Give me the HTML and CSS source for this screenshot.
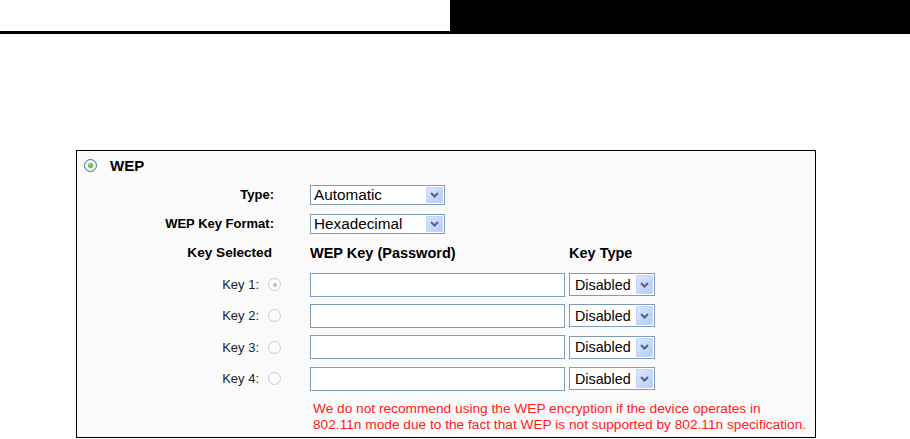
FILE: index.html
```html
<!DOCTYPE html>
<html>
<head>
<meta charset="utf-8">
<link rel="stylesheet" href="styles.css">
</head>
<body>
<div class="header">
  <div class="header-left"></div>
  <div class="header-right"></div>
</div>

<div class="panel">
  <div class="mode-row">
    <span class="radio radio-on"></span>
    <span class="mode-title">WEP</span>
  </div>

  <div class="form">
    <div class="label">Type:</div>
    <div class="cell span2">
      <div class="select select-wide">
        <span class="select-val">Automatic</span>
        <span class="select-btn"><svg width="9" height="6" viewBox="0 0 9 6"><path d="M1 1 L4.5 4.5 L8 1" fill="none" stroke="#4d6185" stroke-width="2"/></svg></span>
      </div>
    </div>

    <div class="label">WEP Key Format:</div>
    <div class="cell span2">
      <div class="select select-wide">
        <span class="select-val">Hexadecimal</span>
        <span class="select-btn"><svg width="9" height="6" viewBox="0 0 9 6"><path d="M1 1 L4.5 4.5 L8 1" fill="none" stroke="#4d6185" stroke-width="2"/></svg></span>
      </div>
    </div>

    <div class="label head">Key Selected</div>
    <div class="cell head">WEP Key (Password)</div>
    <div class="cell head">Key Type</div>

    <div class="label key-label">Key 1:<span class="radio radio-dis radio-dis-on"></span></div>
    <div class="cell"><div class="textbox"></div></div>
    <div class="cell">
      <div class="select select-key">
        <span class="select-val">Disabled</span>
        <span class="select-btn"><svg width="9" height="6" viewBox="0 0 9 6"><path d="M1 1 L4.5 4.5 L8 1" fill="none" stroke="#4d6185" stroke-width="2"/></svg></span>
      </div>
    </div>

    <div class="label key-label">Key 2:<span class="radio radio-dis"></span></div>
    <div class="cell"><div class="textbox"></div></div>
    <div class="cell">
      <div class="select select-key">
        <span class="select-val">Disabled</span>
        <span class="select-btn"><svg width="9" height="6" viewBox="0 0 9 6"><path d="M1 1 L4.5 4.5 L8 1" fill="none" stroke="#4d6185" stroke-width="2"/></svg></span>
      </div>
    </div>

    <div class="label key-label">Key 3:<span class="radio radio-dis"></span></div>
    <div class="cell"><div class="textbox"></div></div>
    <div class="cell">
      <div class="select select-key">
        <span class="select-val">Disabled</span>
        <span class="select-btn"><svg width="9" height="6" viewBox="0 0 9 6"><path d="M1 1 L4.5 4.5 L8 1" fill="none" stroke="#4d6185" stroke-width="2"/></svg></span>
      </div>
    </div>

    <div class="label key-label">Key 4:<span class="radio radio-dis"></span></div>
    <div class="cell"><div class="textbox"></div></div>
    <div class="cell">
      <div class="select select-key">
        <span class="select-val">Disabled</span>
        <span class="select-btn"><svg width="9" height="6" viewBox="0 0 9 6"><path d="M1 1 L4.5 4.5 L8 1" fill="none" stroke="#4d6185" stroke-width="2"/></svg></span>
      </div>
    </div>

    <div class="label"></div>
    <div class="note span2">We do not recommend using the WEP encryption if the device operates in<br>802.11n mode due to the fact that WEP is not supported by 802.11n specification.</div>
  </div>
</div>
</body>
</html>
```

FILE: styles.css
```css
html, body {
  margin: 0;
  padding: 0;
  background: #ffffff;
}

body {
  font-family: "Liberation Sans", Arial, sans-serif;
  font-size: 13px;
  color: #000;
}

.header {
  display: flex;
  height: 34px;
}

.header-left {
  width: 450px;
  height: 31px;
  border-bottom: 3px solid #000;
}

.header-right {
  flex: 1;
  background: #000;
}

.panel {
  margin: 116px 0 0 76px;
  width: 738px;
  height: 286px;
  border: 1px solid #000;
  background: #fafafa;
}

.mode-row {
  display: flex;
  align-items: center;
  height: 29px;
  padding-left: 7px;
}

.mode-title {
  margin-left: 13px;
  font-weight: bold;
  font-size: 15px;
}

.radio {
  display: inline-block;
  box-sizing: border-box;
  width: 13px;
  height: 13px;
  border-radius: 50%;
  position: relative;
}

.radio-on {
  border: 1px solid #3c6ea8;
  background: radial-gradient(circle, #ffffff 0%, #e4e8ec 100%);
}

.radio-on::after {
  content: "";
  position: absolute;
  left: 3px;
  top: 3px;
  width: 5px;
  height: 5px;
  border-radius: 50%;
  background: radial-gradient(circle at 40% 40%, #7ee47e 0%, #21a121 100%);
}

.radio-dis {
  border: 1px solid #c9cdd0;
  background: #fcfcfc;
  margin-left: 9px;
}

.radio-dis-on::after {
  content: "";
  position: absolute;
  left: 3.5px;
  top: 3.5px;
  width: 4px;
  height: 4px;
  border-radius: 50%;
  background: #c0c2c4;
}

.form {
  display: grid;
  grid-template-columns: 233px 259px 246px;
  grid-template-rows: 29px 29px 31px 31px 31px 32px 31px 43px;
}

.label {
  display: flex;
  align-items: center;
  justify-content: flex-end;
  padding-right: 36px;
  font-weight: bold;
}

.key-label {
  font-weight: normal;
  padding-right: 29px;
  color: #222;
}

.cell {
  display: flex;
  align-items: center;
}

.span2 {
  grid-column: span 2;
}

.head {
  font-weight: bold;
}

.cell.head {
  padding-bottom: 2px;
  font-size: 14.5px;
}

.label.head {
  padding-right: 38px;
  padding-bottom: 2px;
  font-size: 13.6px;
}

.textbox {
  box-sizing: border-box;
  width: 255px;
  height: 24px;
  border: 1px solid #7f9db9;
  background: #fff;
}

.select {
  box-sizing: border-box;
  display: flex;
  align-items: center;
  border: 1px solid #7f9db9;
  background: #fff;
  padding: 1px;
}

.select-wide {
  width: 135px;
  height: 20px;
  margin-top: 1px;
}

.select-wide .select-val {
  font-size: 15.3px;
  padding-left: 2px;
}

.select-key {
  width: 86px;
  height: 23px;
}

.select-val {
  flex: 1;
  padding-left: 4px;
  font-size: 14.3px;
  color: #000;
  white-space: nowrap;
}

.select-btn {
  box-sizing: border-box;
  flex: none;
  width: 17px;
  height: 100%;
  display: flex;
  align-items: center;
  justify-content: center;
  background: linear-gradient(135deg, #dce7fd 0%, #b7cbf6 100%);
  border: 1px solid #c3d3fd;
  border-radius: 1px;
}

.note {
  padding: 7px 0 0 3px;
  color: #ff1a1a;
  font-size: 13.7px;
  line-height: 16px;
  white-space: nowrap;
}
```
